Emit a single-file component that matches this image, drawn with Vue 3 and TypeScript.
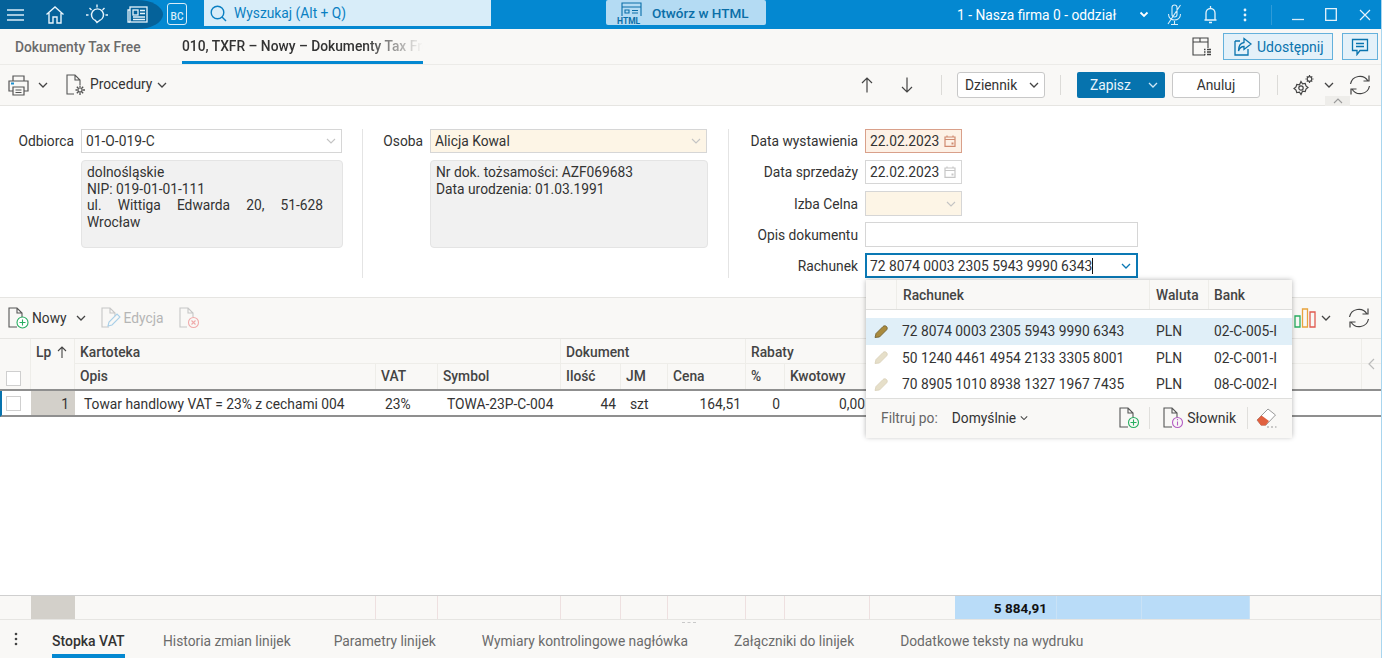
<script setup lang="ts">
interface Acc { nr: string; bank: string; active?: boolean }
const accounts: Acc[] = [
  { nr: '72 8074 0003 2305 5943 9990 6343', bank: '02-C-005-I', active: true },
  { nr: '50 1240 4461 4954 2133 3305 8001', bank: '02-C-001-I' },
  { nr: '70 8905 1010 8938 1327 1967 7435', bank: '08-C-002-I' },
];
const bottomTabs = ['Historia zmian linijek', 'Parametry linijek', 'Wymiary kontrolingowe nagłówka', 'Załączniki do linijek', 'Dodatkowe teksty na wydruku'];
const sumCells = 14;
</script>

<template>
  <div class="page">
    <header class="top">
      <div class="top-dark">
        <svg class="ic ham" width="20" height="14" viewBox="0 0 20 14"><path d="M2 2h17M2 7h17M2 12h17" stroke="#d7ecf8" stroke-width="1.6" fill="none"/></svg>
        <svg class="ic home" width="20" height="20" viewBox="0 0 20 20" fill="none" stroke="#e6f3fb" stroke-width="1.4"><path d="M1.5 9.5 10 2l8.500 7.500M4 8v10h4v-6h4v6h4V8"/></svg>
        <svg class="ic bulb" width="24" height="24" viewBox="0 0 24 24" fill="none" stroke="#e6f3fb" stroke-width="1.4"><path d="M12 19.500 10.500 17.500A6 6 0 1 1 14.500 17.500Z"/><path d="M12 1.500v3M4.500 5l2 2M19.500 5l-2 2M1 12h2.500M20.500 12H23"/></svg>
        <svg class="ic news" width="21" height="17" viewBox="0 0 21 17" fill="none" stroke="#e6f3fb" stroke-width="1.3"><rect x="3" y="1" width="17" height="15"/><path d="M3 4H1v12h2"/><rect x="6" y="4" width="5" height="5"/><path d="M13 4.500h5M13 7.500h5M6 11h12M6 13.500h12"/></svg>
      </div>
      <div class="bc">BC</div>
      <div class="search">
        <svg width="17" height="17" viewBox="0 0 17 17" fill="none" stroke="#0a7fc2" stroke-width="1.4"><circle cx="7.500" cy="7.500" r="6.300"/><path d="m12 12 4 4"/></svg>
        <span>Wyszukaj (Alt + Q)</span>
      </div>
      <div class="html-btn">
        <svg width="29" height="24" viewBox="0 0 29 24" fill="none" stroke="#0a6ea8" stroke-width="1.1"><path d="M6 15V2h19v13M6 6h19M16 9.500h6M16 12h6M9 9h4v3H9z"/><text x="1" y="23" font-size="8.500" font-weight="700" fill="#0a6ea8" stroke="none" font-family="Roboto">HTML</text></svg>
        <span>Otwórz w HTML</span>
      </div>
      <div class="top-right">
        <span class="firm">1 - Nasza firma 0 - oddział</span>
        <svg class="firm-chev" width="10" height="7" viewBox="0 0 10 7" fill="none" stroke="#fff" stroke-width="1.800"><path d="m1.500 1.500 3.500 3.500 3.500-3.500"/></svg>
        <svg class="mic" width="18" height="22" viewBox="0 0 18 22" fill="none" stroke="#d9eef9" stroke-width="1.100"><path d="M7 3.500a2.500 2.500 0 0 1 5 0v7a2.500 2.500 0 0 1-5 0zM3.500 10c0 8 12 8 12 0M9.500 17v3.500M6 20.500h7M15.500 1 3 20"/></svg>
        <svg class="bell" width="15" height="20" viewBox="0 0 15 20" fill="none" stroke="#e6f3fb" stroke-width="1.300"><path d="M7.500 1v2M3 15V8a4.500 4.500 0 0 1 9 0v7zM1.500 15h12M6 17.500h3"/></svg>
        <svg class="dots" width="4" height="14" viewBox="0 0 4 14" fill="#e6f3fb"><circle cx="2" cy="2" r="1.400"/><circle cx="2" cy="7" r="1.400"/><circle cx="2" cy="12" r="1.400"/></svg>
        <i class="top-div"></i>
        <svg class="win min" width="12" height="12" viewBox="0 0 12 12"><path d="M0 10.500h12" stroke="#d7ecf8" stroke-width="1.300"/></svg>
        <svg class="win max" width="12" height="13" viewBox="0 0 12 13" fill="none"><path d="M.7.700h10.600v11.600H.7z" stroke="#e6f3fb" stroke-width="1.300"/></svg>
        <svg class="win close" width="12" height="12" viewBox="0 0 12 12"><path d="m1 1 10 10M11 1 1 11" stroke="#e6f3fb" stroke-width="1.200"/></svg>
      </div>
    </header>

    <nav class="tabs">
      <span class="tab-a">Dokumenty Tax Free</span>
      <span class="tab-b"><span class="tab-b-text">010, TXFR – Nowy – Dokumenty Tax Free</span></span>
      <div class="tabs-right">
        <svg class="panels" width="22" height="22" viewBox="0 0 22 22" fill="none" stroke="#444" stroke-width="1.100"><path d="M14 19H2V2h15v10M2 6h15M9 2v4"/><path d="M13 13.500h1.500M16 13.500h4M13 16h1.500M16 16h4M13 18.500h1.500M16 18.500h4" stroke-width="1.400"/></svg>
        <div class="share">
          <svg width="20" height="20" viewBox="0 0 20 20" fill="none" stroke="#0a74ae" stroke-width="1.300"><path d="M3 4h5M3 4v14h13v-6"/><path d="m12 1.500 7 5.500-7 5.500V9.500C9 9.500 7.500 11 6.500 14c0-5 2-8 5.500-8.500z"/></svg>
          <span>Udostępnij</span>
        </div>
        <div class="comment">
          <svg width="18" height="18" viewBox="0 0 18 18" fill="none" stroke="#0a74ae" stroke-width="1.300"><path d="M1.500 1.500h15v11H9l-3 4v-4H1.500z"/><path d="M5 5.500h8M5 8.500h8"/></svg>
        </div>
      </div>
    </nav>

    <div class="toolbar">
      <svg class="t-print" width="21" height="21" viewBox="0 0 21 21" fill="none" stroke="#555" stroke-width="1.200"><path d="M5 6V1h11v5M5 16H1V6h19v10h-4"/><path d="M5 12h11v8H5zM7.500 15h6M7.500 17.500h6"/><path d="M3 8.500h3" stroke="#1b8fd0" stroke-width="2"/></svg>
      <svg class="chev t-c1" width="10" height="6" viewBox="0 0 10 6"><path d="m1 1 4 4 4-4"/></svg>
      <svg class="t-proc" width="20" height="22" viewBox="0 0 20 22" fill="none" stroke="#555" stroke-width="1.100"><path d="M8 20H1V1h8l5 5v5M9 1v5h5"/><circle cx="14" cy="16" r="2"/><path d="M14 11.500v2M14 18.500v2.500M9.500 16h2M16.500 16h2.500M10.800 12.800l1.500 1.500M15.700 17.700l1.500 1.500M17.200 12.800l-1.500 1.500M12.300 17.700l-1.500 1.500" stroke-width="1.300"/></svg>
      <span class="t-label">Procedury</span>
      <svg class="chev t-c2" width="10" height="6" viewBox="0 0 10 6"><path d="m1 1 4 4 4-4"/></svg>
      <div class="t-right">
        <svg class="arrow" width="12" height="16" viewBox="0 0 12 16" fill="none" stroke="#444" stroke-width="1.200"><path d="M6 15.500V1M1 6l5-5 5 5"/></svg>
        <svg class="arrow a2" width="12" height="16" viewBox="0 0 12 16" fill="none" stroke="#444" stroke-width="1.200"><path d="M6 .5V15M1 10l5 5 5-5"/></svg>
        <i class="vdiv d1"></i>
        <div class="dziennik"><span>Dziennik</span><svg class="chev" width="10" height="6" viewBox="0 0 10 6"><path d="m1 1 4 4 4-4"/></svg></div>
        <i class="vdiv d2"></i>
        <div class="zapisz"><span>Zapisz</span><svg width="10" height="6" viewBox="0 0 10 6" fill="none" stroke="#cfe7f5" stroke-width="1.300"><path d="m1 1 4 4 4-4"/></svg></div>
        <div class="anuluj">Anuluj</div>
        <i class="vdiv d3"></i>
        <svg class="gears" width="22" height="22" viewBox="0 0 22 22" fill="none" stroke="#444" stroke-width="1.200"><circle cx="8" cy="14" r="2.200"/><path d="M8 7.500l1.500 2.300 2.700-.4.800 2.500 2 1.600-2 1.600-.8 2.500-2.700-.4L8 20.500l-1.500-2.300-2.700.4-.8-2.500-2-1.600 2-1.600.8-2.500 2.700.4z"/><circle cx="16.500" cy="5" r="2.300"/><path d="M16.500 1v1M16.500 8v1M12.500 5h1M19.500 5h1M13.800 2.300l.7.700M18.500 7l.7.700M19.200 2.300l-.7.700M14.500 7l-.7.700"/></svg>
        <svg class="chev t-c3" width="10" height="6" viewBox="0 0 10 6"><path d="m1 1 4 4 4-4"/></svg>
        <svg class="refresh" width="22" height="22" viewBox="0 0 22 22" fill="none" stroke="#444" stroke-width="1.200"><path d="M1.500 10A9.500 9.500 0 0 1 19 7M20.500 12A9.500 9.500 0 0 1 3 15M20 1.500V7h-5.500M2 20.500V15h5.500"/></svg>
      </div>
      <div class="collapse"><svg width="10" height="6" viewBox="0 0 10 6" fill="none" stroke="#9a9a9a" stroke-width="1.100"><path d="m1 5 4-4 4 4"/></svg></div>
    </div>

    <section class="form">
      <div class="f-col c1">
        <div class="line">
          <label>Odbiorca</label>
          <div class="inp combo"><span>01-O-019-C</span><svg class="chev light" width="10" height="6" viewBox="0 0 10 6"><path d="m1 1 4 4 4-4"/></svg></div>
        </div>
        <div class="info just">dolnośląskie<br>NIP: 019-01-01-111<br>ul. Wittiga Edwarda 20, 51-628 Wrocław</div>
      </div>
      <div class="f-col c2">
        <div class="line">
          <label>Osoba</label>
          <div class="inp combo req"><span>Alicja Kowal</span><svg class="chev light" width="10" height="6" viewBox="0 0 10 6"><path d="m1 1 4 4 4-4"/></svg></div>
        </div>
        <div class="info">Nr dok. tożsamości: AZF069683<br>Data urodzenia: 01.03.1991</div>
      </div>
      <div class="f-col c3">
        <div class="row3 short"><label>Data wystawienia</label>
          <div class="inp date warn"><span>22.02.2023</span>
            <svg width="12" height="12" viewBox="0 0 12 12" fill="none" stroke="#d08a70" stroke-width="1.200"><path d="M1 2h10v9.400H1zM1 4.500h10M3 .5v2M9 .5v2"/><path d="M7.500 7.500h2v2h-2z" fill="#d08a70" stroke="none"/></svg>
          </div></div>
        <div class="row3 short"><label>Data sprzedaży</label>
          <div class="inp date"><span>22.02.2023</span>
            <svg width="12" height="12" viewBox="0 0 12 12" fill="none" stroke="#c6c6c6" stroke-width="1.200"><path d="M1 2h10v9.400H1zM1 4.500h10M3 .5v2M9 .5v2"/><path d="M7.500 7.500h2v2h-2z" fill="#c6c6c6" stroke="none"/></svg>
          </div></div>
        <div class="row3"><label>Izba Celna</label>
          <div class="inp date req2"><span></span><svg class="chev light" width="10" height="6" viewBox="0 0 10 6"><path d="m1 1 4 4 4-4"/></svg></div></div>
        <div class="row3"><label>Opis dokumentu</label><div class="inp wide"></div></div>
        <div class="row3"><label>Rachunek</label>
          <div class="inp wide focus"><span>72 8074 0003 2305 5943 9990 6343<i class="caret"></i></span><svg width="10" height="6" viewBox="0 0 10 6" fill="none" stroke="#0a78b4" stroke-width="1.300"><path d="m1 1 4 4 4-4"/></svg></div></div>
      </div>
    </section>

    <div class="g-toolbar">
      <svg class="g-new" width="21" height="22" viewBox="0 0 21 22" fill="none" stroke="#555" stroke-width="1.100"><path d="M9 20H1V1h8l5 5v5M9 1v5h5"/><circle cx="14.500" cy="15.500" r="5.500" stroke="#27ae60" fill="#fff"/><path d="M14.500 12.500v6M11.500 15.500h6" stroke="#27ae60"/></svg>
      <span class="g-l">Nowy</span>
      <svg class="chev g-c" width="10" height="6" viewBox="0 0 10 6"><path d="m1 1 4 4 4-4"/></svg>
      <svg class="g-edit" width="20" height="22" viewBox="0 0 20 22" fill="none" stroke="#c6c6c6" stroke-width="1.100"><path d="M8 20H1V1h8l5 5v3M9 1v5h5"/><path d="m7 19 1-4 8-8 3 3-8 8z" stroke="#a9cfe8"/></svg>
      <span class="g-l dis">Edycja</span>
      <svg class="g-del" width="21" height="22" viewBox="0 0 21 22" fill="none" stroke="#c6c6c6" stroke-width="1.100"><path d="M8 20H1V1h8l5 5v4M9 1v5h5"/><circle cx="14.500" cy="15.500" r="5" stroke="#f0aaaa"/><path d="m12.500 13.500 4 4M16.500 13.500l-4 4" stroke="#f0aaaa"/></svg>
      <div class="g-right">
        <svg width="22" height="20" viewBox="0 0 22 20" fill="none" stroke-width="1.300"><path d="M1 8h5v11H1z" stroke="#27ae60"/><path d="M8.500 1h5v18h-5z" stroke="#e8a33d"/><path d="M16 4h5v15h-5z" stroke="#e05a50"/></svg>
        <svg class="chev g-c2" width="10" height="6" viewBox="0 0 10 6"><path d="m1 1 4 4 4-4"/></svg>
        <svg class="g-ref" width="22" height="22" viewBox="0 0 22 22" fill="none" stroke="#444" stroke-width="1.200"><path d="M1.500 10A9.500 9.500 0 0 1 19 7M20.500 12A9.500 9.500 0 0 1 3 15M20 1.500V7h-5.500M2 20.500V15h5.500"/></svg>
      </div>
    </div>

    <section class="grid-area">
      <div class="g-head">
        <div class="h chk"><i class="box"></i></div>
        <div class="h lp"><span>Lp</span><svg width="10" height="12" viewBox="0 0 10 12" fill="none" stroke="#444" stroke-width="1.100"><path d="M5 12V1M1 5l4-4 4 4"/></svg></div>
        <div class="h g1">Kartoteka</div>
        <div class="h g2">Dokument</div>
        <div class="h g3">Rabaty</div>
        <div class="h g4"></div>
        <div class="h s s1">Opis</div>
        <div class="h s s2">VAT</div>
        <div class="h s s3">Symbol</div>
        <div class="h s s4">Ilość</div>
        <div class="h s s5">JM</div>
        <div class="h s s6">Cena</div>
        <div class="h s s7">%</div>
        <div class="h s s8">Kwotowy</div>
        <div class="h s s9"></div>
        <div class="side"><svg width="7" height="12" viewBox="0 0 7 12" fill="none" stroke="#bbb" stroke-width="1.200"><path d="M6 1 1 6l5 5"/></svg></div>
      </div>
      <div class="g-row">
        <div class="c"><i class="box b2"></i></div>
        <div class="c num">1</div>
        <div class="c t1">Towar handlowy VAT = 23% z cechami 004</div>
        <div class="c t2">23%</div>
        <div class="c t2">TOWA-23P-C-004</div>
        <div class="c r">44</div>
        <div class="c t3">szt</div>
        <div class="c r">164,51</div>
        <div class="c r">0</div>
        <div class="c r">0,00</div>
      </div>
      <div class="g-empty"></div>
      <div class="g-sum">
        <div v-for="n in sumCells" :key="n" class="sc" :class="'sc' + n">{{ n === 11 ? '5 884,91' : '' }}</div>
      </div>
    </section>

    <footer class="bottom">
      <svg class="b-dots" width="4" height="14" viewBox="0 0 4 14" fill="#444"><circle cx="2" cy="2" r="1.300"/><circle cx="2" cy="7" r="1.300"/><circle cx="2" cy="12" r="1.300"/></svg>
      <span class="b-tab active">Stopka VAT</span>
      <span v-for="t in bottomTabs" :key="t" class="b-tab">{{ t }}</span>
      <i class="handle"></i>
    </footer>

    <div class="popup">
      <div class="p-head">
        <div class="p-h0"></div><div class="p-h1">Rachunek</div><div class="p-h2">Waluta</div><div class="p-h3">Bank</div>
      </div>
      <div class="p-rows">
        <div v-for="a in accounts" :key="a.nr" class="p-row" :class="{ on: a.active }">
          <svg width="14" height="13" viewBox="0 0 14 13" :fill="a.active ? '#a98a3e' : '#e6dfc9'" :stroke="a.active ? '#6b5a2c' : '#d8d0b8'" stroke-width=".8"><path d="M1 12.500 2 8.500 9 1.500c1-1 2.500-1 3.500 0s1 2.500 0 3.500L5.500 12z"/></svg>
          <span class="p-nr">{{ a.nr }}</span><span class="p-cur">PLN</span><span class="p-bank">{{ a.bank }}</span>
        </div>
      </div>
      <div class="p-foot">
        <span class="p-f">Filtruj po:</span>
        <span class="p-d">Domyślnie</span>
        <svg class="chev p-c" width="10" height="6" viewBox="0 0 10 6"><path d="m1 1 4 4 4-4"/></svg>
        <svg class="p-new" width="21" height="22" viewBox="0 0 21 22" fill="none" stroke="#555" stroke-width="1.100"><path d="M9 20H1V1h8l5 5v5M9 1v5h5"/><circle cx="14.500" cy="15.500" r="5" stroke="#27ae60" fill="#f9f8f6"/><path d="M14.500 12.500v6M11.500 15.500h6" stroke="#27ae60"/></svg>
        <i class="p-div"></i>
        <svg class="p-slo" width="21" height="22" viewBox="0 0 21 22" fill="none" stroke="#555" stroke-width="1.100"><path d="M9 20H1V1h8l5 5v5M9 1v5h5"/><circle cx="14.500" cy="15.500" r="5" stroke="#b45cc4" fill="#f9f8f6"/><path d="M14.500 14.500v4M14.500 12v1.300" stroke="#b45cc4"/></svg>
        <span class="p-s">Słownik</span>
        <i class="p-div d"></i>
        <svg class="p-er" width="21" height="20" viewBox="0 0 21 20" fill="none"><path d="M1 12 12 1l7.500 6-9.500 10H5z" stroke="#999" fill="#fff"/><path d="M1 12l4.500-4.500 7.500 5.500-3.500 4.500H5z" fill="#e0603f"/><path d="M11 19h2M15 19h2M19 19h1.500" stroke="#999"/></svg>
      </div>
    </div>
  </div>
</template>

<style>
html, body { margin: 0; background: #fff; }
</style>

<style scoped>
.page { position: relative; width: 1381px; height: 658px; overflow: hidden; display: flex; flex-direction: column; font-family: Roboto, "Liberation Sans", sans-serif; font-size: 13.800px; color: #333; background: #fff; border-right: 1px solid #a9d6ef; box-sizing: content-box; }
i { display: block; }
.chev { fill: none; stroke: #444; stroke-width: 1.300; flex: none; }
.chev.light { stroke: #c4c4c4; stroke-width: 1.100; }

.top { height: 29px; flex: none; background: #0488d1; display: flex; align-items: center; }
.top-dark { width: 163px; height: 29px; background: #05629a; border-radius: 0 26px 26px 0 / 0 50% 50% 0; display: flex; align-items: center; flex: none; }
.ham { margin-left: 5px; }
.home { margin-left: 20px; }
.bulb { margin-left: 20px; }
.news { margin-left: 18px; }
.bc { width: 18px; height: 19px; margin-left: 4px; margin-top: -1px; border: 1.500px solid #d9ecf8; border-radius: 3px; color: #d9ecf8; font-size: 10px; font-weight: 500; display: flex; align-items: flex-end; justify-content: center; padding-bottom: 1px; box-sizing: content-box; line-height: 12px; flex: none; }
.search { width: 287px; height: 26px; margin-left: 17px; margin-top: -3px; background: #d8edf9; display: flex; align-items: center; color: #0a7fc2; font-size: 13.800px; flex: none; box-sizing: border-box; padding-left: 6px; gap: 7px; }
.html-btn { width: 160px; height: 25px; margin-left: 115px; margin-top: -4px; background: #b4dbf3; border-radius: 2px; display: flex; align-items: center; color: #0a6ea8; font-weight: 500; font-size: 13.500px; padding-left: 10px; box-sizing: border-box; gap: 7px; flex: none; }
.top-right { flex: 1; display: flex; align-items: center; color: #fff; height: 100%; }
.firm { margin-left: 191px; font-size: 13.800px; white-space: nowrap; }
.firm-chev { margin-left: 23px; }
.mic { margin-left: 16px; }
.bell { margin-left: 20px; }
.dots { margin-left: 25px; }
.top-div { width: 1px; height: 20px; background: #2f9bd8; margin-left: 24px; }
.win { flex: none; }
.min { margin-left: 20px; }
.max { margin-left: 21px; }
.close { margin-left: 22px; }

.tabs { height: 36px; flex: none; background: #f9f8f6; display: flex; align-items: center; font-weight: 500; font-size: 13.800px; box-sizing: border-box; border-bottom: 1px solid #ecebe8; }
.tab-a { margin-left: 15px; width: 126px; color: #6b6b6b; white-space: nowrap; padding-top: 1px; }
.tab-b { margin-left: 41px; width: 241px; height: 35px; box-sizing: border-box; border-bottom: 3px solid #0488d1; display: flex; align-items: center; overflow: hidden; color: #333; white-space: nowrap; padding-top: 2px; }
.tab-b-text { display: block; width: 241px; overflow: hidden; -webkit-mask-image: linear-gradient(to right, #000 76%, transparent 100%); mask-image: linear-gradient(to right, #000 76%, transparent 100%); }
.tabs-right { margin-left: auto; display: flex; align-items: center; }
.panels { margin-right: 10px; }
.share { width: 110px; height: 27px; box-sizing: border-box; border: 1px solid #64b1dc; background: #e4f1f9; display: flex; align-items: center; gap: 5px; padding-left: 8px; color: #0a74ae; font-weight: 400; font-size: 14px; }
.comment { width: 36px; height: 27px; margin-left: 9px; margin-right: 3px; box-sizing: border-box; border: 1px solid #64b1dc; background: #e4f1f9; display: flex; align-items: center; justify-content: center; }

.toolbar { position: relative; height: 41px; flex: none; background: #f9f8f6; border-bottom: 1px solid #e6e5e2; box-sizing: border-box; display: flex; align-items: center; }
.t-print { margin-left: 8px; }
.t-c1 { margin-left: 9px; }
.t-proc { margin-left: 18px; }
.t-label { margin-left: 4px; margin-top: -2px; }
.t-c2 { margin-left: 5px; }
.t-right { margin-left: auto; display: flex; align-items: center; }
.a2 { margin-left: 28px; }
.vdiv { width: 1px; height: 20px; background: #dcdbd8; }
.d1 { margin-left: 28px; }
.dziennik { width: 88px; height: 26px; margin-left: 15px; box-sizing: border-box; background: #fff; border: 1px solid #c8c8c8; border-radius: 3px; display: flex; align-items: center; justify-content: space-between; padding: 0 5px 0 7px; }
.d2 { margin-left: 15px; }
.zapisz { width: 88px; height: 26px; margin-left: 16px; box-sizing: border-box; background: #0673ae; border-radius: 2px; color: #eaf5fb; display: flex; align-items: center; justify-content: space-between; padding: 0 7px 0 13px; }
.anuluj { width: 88px; height: 26px; margin-left: 7px; box-sizing: border-box; background: #fff; border: 1px solid #c8c8c8; border-radius: 3px; display: flex; align-items: center; justify-content: center; }
.d3 { margin-left: 17px; }
.gears { margin-left: 15px; }
.t-c3 { margin-left: 9px; }
.refresh { margin-left: 15px; margin-right: 10px; }
.collapse { position: absolute; right: 31px; bottom: -1px; width: 25px; height: 10px; background: #eeedea; display: flex; align-items: center; justify-content: center; }

.form { height: 192px; flex: none; background: #fff; display: grid; grid-template-columns: 363px 366px 1fr; box-sizing: border-box; padding-top: 23px; border-bottom: 1px solid #e6e5e2; }
.f-col { height: 149px; box-sizing: border-box; }
.c1, .c2 { border-right: 1px solid #e4e4e4; }
.line { display: flex; align-items: center; height: 24px; }
.c1 .line label { width: 74px; text-align: right; }
.c1 .line .inp { margin-left: 7px; width: 261px; }
.c2 .line label { width: 60px; text-align: right; }
.c2 .line .inp { margin-left: 7px; width: 277px; }
label { color: #333; white-space: nowrap; flex: none; }
.inp { height: 25px; box-sizing: border-box; border: 1px solid #d6d6d6; background: #fff; display: flex; align-items: center; justify-content: space-between; padding: 0 4px; flex: none; }
.line .inp, .short .inp { height: 24px; }
.combo { border-width: 1.500px; }
.combo .chev { margin-right: 1px; }
.req { background: #fdf5e6; }
.req2 { background: #fdf5e6; }
.info { margin-top: 7px; height: 88px; box-sizing: border-box; width: 262px; margin-left: 81px; padding: 3px 19px 3px 5px; background: #f1f1f1; border: 1px solid #e4e4e4; border-radius: 4px; line-height: 16.500px; }
.just { text-align: justify; }
.c2 .info { margin-left: 67px; width: 278px; }
.row3 { display: flex; align-items: center; height: 25px; margin-bottom: 6px; }
.row3.short { height: 24px; margin-bottom: 7px; }
.row3 label { width: 129px; text-align: right; }
.row3 .inp { margin-left: 7px; }
.date { width: 97px; }
.date svg { margin-right: 1px; }
.warn { background: #fdf1e6; border-color: #d9a08a; }
.wide { width: 273px; }
.focus { border: 2px solid #0a78b4; padding: 0 4px 0 3px; }
.focus svg { margin-right: 1px; }
.caret { display: inline-block; width: 1px; height: 16px; background: #111; vertical-align: -3px; }

.g-toolbar { height: 41px; flex: none; background: #f9f8f6; display: flex; align-items: center; box-sizing: border-box; border-bottom: 1px solid #e6e5e2; position: relative; }
.g-new { margin-left: 8px; }
.g-l { margin-left: 3px; }
.g-c { margin-left: 9px; }
.g-edit { margin-left: 15px; }
.dis { color: #b5b5b5; }
.g-del { margin-left: 15px; }
.g-right { margin-left: auto; display: flex; align-items: center; }
.g-c2 { margin-left: 5px; }
.g-ref { margin-left: 17px; margin-right: 11px; }

.grid-area { flex: 1; display: flex; flex-direction: column; min-height: 0; }
.g-head { position: relative; height: 52px; flex: none; display: grid; grid-template-columns: 31px 44px 301px 62px 123px 60px 47px 78px 39px 85px 1fr; grid-template-rows: 25px 25px; background: #f9f8f6; border-bottom: 2px solid #8f8f8f; box-sizing: border-box; font-weight: 500; font-size: 13.800px; color: #444; }
.h { display: flex; align-items: center; padding-left: 5px; padding-top: 1px; box-sizing: border-box; border-right: 1px solid #eeede9; white-space: nowrap; }
.s { padding-bottom: 2px; }
.chk { grid-row: 1 / 3; align-items: flex-end; padding: 0 0 3px 6px; }
.lp { grid-row: 1 / 3; align-items: flex-start; justify-content: space-between; padding: 5px 7px 0 5px; }
.lp svg { margin-top: 2px; }
.g1 { grid-column: 3 / 6; border-bottom: 1px solid #eeede9; }
.g2 { grid-column: 6 / 9; border-bottom: 1px solid #eeede9; }
.g3 { grid-column: 9 / 11; border-bottom: 1px solid #eeede9; }
.g4 { grid-column: 11 / 12; border-bottom: 1px solid #eeede9; border-right: 0; }
.s9 { border-right: 0; }
.box { width: 13px; height: 13px; border: 1px solid #cfcfcf; background: #fff; }
.side { position: absolute; right: 0; top: 0; width: 19px; height: 50px; border-left: 1px solid #eeede9; display: flex; align-items: center; justify-content: center; }
.g-row { height: 26px; flex: none; display: grid; grid-template-columns: 29px 44px 301px 62px 123px 60px 47px 78px 39px 85px; background: #fff; border-bottom: 2px solid #8f8f8f; border-left: 2px solid #0673ae; box-sizing: border-box; }
.c { display: flex; align-items: center; white-space: nowrap; box-sizing: border-box; padding-top: 1px; }
.c:first-child { margin-left: -2px; padding-left: 6px; }
.num { background: #d3d0ca; justify-content: flex-end; padding-right: 6px; }
.t1, .t2, .t3 { padding-left: 9px; }
.r { justify-content: flex-end; padding-right: 5px; }
.g-empty { flex: 1; background: #fff; }
.g-sum { height: 25px; flex: none; display: grid; grid-template-columns: 31px 44px 301px 62px 123px 60px 47px 78px 39px 85px 85px 102px 85px 108px 1fr; background: #f9f8f6; border-top: 1px solid #cfcfcf; border-bottom: 1px solid #e6e5e2; box-sizing: border-box; }
.sc { border-right: 1px solid #eee0e0; box-sizing: border-box; font-weight: 700; font-size: 13.500px; color: #111; display: flex; align-items: center; justify-content: flex-end; padding-right: 9px; }
.sc1, .sc2 { border-right: 0; }
.sc2 { background: #d3d0ca; }
.sc11, .sc12, .sc13 { background: #b9dcf8; border-right-color: #c9e2f6; }
.sc11 { grid-column: 12; }
.sc12 { grid-column: 13; }
.sc13 { grid-column: 14; }

.bottom { position: relative; height: 38px; flex: none; background: #f9f8f6; display: flex; align-items: center; color: #6b6b6b; font-size: 13.800px; }
.b-dots { margin-left: 14px; }
.b-tab { margin-left: 46px; white-space: nowrap; height: 38px; line-height: 42px; box-sizing: border-box; }
.b-dots + .b-tab { margin-left: 34px; }
.active { width: 73px; color: #333; font-weight: 500; border-bottom: 4px solid #0488d1; white-space: nowrap; font-size: 14px; }
.b-tab:nth-of-type(2) { margin-left: 38px; }
.b-tab:nth-of-type(3) { margin-left: 43px; }
.handle { position: absolute; left: 682px; top: 2px; width: 14px; border-top: 1px dashed #c9c9c9; }

.popup { position: absolute; left: 866px; top: 280px; width: 426px; height: 157px; background: #fff; box-shadow: 0 0 5px rgba(0,0,0,.3); display: flex; flex-direction: column; }
.p-head { height: 30px; flex: none; display: flex; background: #f9f8f6; border-bottom: 1px solid #dededc; box-sizing: border-box; font-weight: 500; font-size: 13.800px; color: #444; }
.p-head div { display: flex; align-items: center; border-right: 1px solid #eeede9; box-sizing: border-box; padding-left: 6px; }
.p-h0 { width: 31px; }
.p-h1 { width: 253px; }
.p-h2 { width: 59px; }
.p-h3 { flex: 1; border-right: 0 !important; padding-left: 5px !important; }
.p-rows { flex: 1; padding-top: 8px; }
.p-row { height: 26.500px; display: flex; align-items: center; white-space: nowrap; }
.p-row svg { margin-left: 8px; width: 14px; flex: none; }
.on { background: #e0eff8; }
.p-nr { margin-left: 14px; width: 254px; }
.p-cur { width: 58px; }
.p-foot { height: 40px; flex: none; background: #f9f8f6; border-top: 1px solid #dededc; box-sizing: border-box; display: flex; align-items: center; }
.p-f { margin-left: 15px; color: #666; }
.p-d { margin-left: 14px; }
.p-c { margin-left: 3px; transform: scale(.8); }
.p-new { margin-left: 90px; }
.p-div { width: 1px; height: 22px; background: #e0dfdc; margin-left: 9px; }
.p-slo { margin-left: 13px; }
.p-s { margin-left: 3px; font-size: 14px; }
.p-div.d { margin-left: 11px; }
.p-er { margin-left: 8px; }
</style>
